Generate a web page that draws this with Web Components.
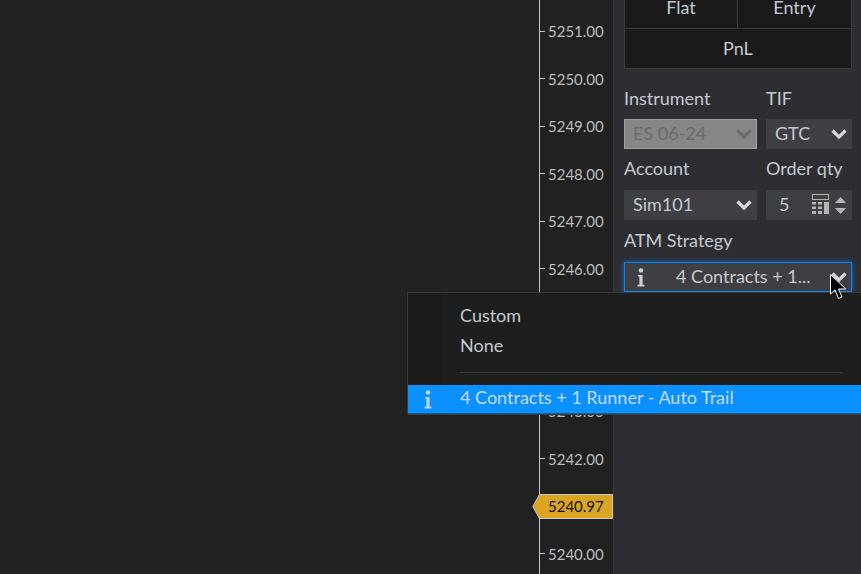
<!DOCTYPE html>
<html>
<head>
<meta charset="utf-8">
<title>Chart Trader</title>
<style>
html, body { margin: 0; height: 100%; overflow: hidden; background: #212121; }
body { font: 18px Lato, "Open Sans", sans-serif; color: #c4cad0; }
</style>
</head>
<body>
<trade-window>
	<price-axis slot="axis" from="5251" to="5240" marker="5240.97"></price-axis>
	<order-panel slot="panel"></order-panel>
	<atm-menu slot="menu"></atm-menu>
	<mouse-cursor slot="menu"></mouse-cursor>
</trade-window>

<script>
const FONT = `Lato, "Open Sans", sans-serif`

customElements.define("trade-window", class extends HTMLElement {
	connectedCallback() {
		if (this.shadowRoot) return
		this.attachShadow({mode: "open"}).innerHTML = `
			<style>
				:host {
					display: flex;
					position: relative;
					width: 861px;
					height: 574px;
					overflow: hidden;
					background: #212121;
				}
				.chart { width: 539px; flex: none; }
			</style>
			<div class="chart"></div>
			<slot name="axis"></slot>
			<slot name="panel"></slot>
			<slot name="menu"></slot>
		`
	}
})

customElements.define("price-axis", class extends HTMLElement {
	connectedCallback() {
		if (this.shadowRoot) return
		const from = +this.getAttribute("from")
		const to = +this.getAttribute("to")
		let ticks = ""
		for (let p = from; p >= to; p--) {
			ticks += `<div class="tick"><i></i><span>${p.toFixed(2)}</span></div>`
		}
		this.attachShadow({mode: "open"}).innerHTML = `
			<style>
				:host {
					display: block;
					position: relative;
					flex: none;
					width: 75px;
					height: 574px;
					box-sizing: border-box;
					border-left: 1px solid #c4c4c4;
					border-right: 1px solid #3a3a3d;
					padding-top: 7.5px;
					background: #212121;
				}
				.tick {
					display: flex;
					align-items: center;
					height: 47.5px;
					color: #bdbdbd;
					font: 15px ${FONT};
				}
				.tick i {
					display: block;
					width: 5px;
					height: 1px;
					margin-right: 3px;
					background: #c4c4c4;
				}
				.marker {
					position: absolute;
					left: -8px;
					top: 494px;
					width: 81px;
					height: 25px;
				}
				.marker svg { position: absolute; inset: 0; }
				.marker span {
					position: relative;
					display: block;
					padding-left: 16px;
					color: #111;
					font: 15px/25px ${FONT};
				}
			</style>
			${ticks}
			<div class="marker">
				<svg width="81" height="25"><path d="M.8 12.500 7.500.5H80.500V24.500H7.500Z" fill="#daa520" stroke="#c8c8c8"/></svg>
				<span>${this.getAttribute("marker")}</span>
			</div>
		`
	}
})

customElements.define("info-icon", class extends HTMLElement {
	connectedCallback() {
		if (this.shadowRoot) return
		this.attachShadow({mode: "open"}).innerHTML = `
			<style>
				:host { display: inline-flex; flex: none; width: 8px; height: 19px; color: #c3d3e2; }
			</style>
			<svg width="8" height="19" viewBox="0 0 8 19" fill="currentColor">
				<circle cx="4" cy="2.500" r="2.300"/>
				<path d="M1 7H5.600V16.800H7.400V18.500H.6V16.800H2.400V8.500H1Z"/>
			</svg>
		`
	}
})

customElements.define("field-select", class extends HTMLElement {
	connectedCallback() {
		if (this.shadowRoot) return
		this.attachShadow({mode: "open"}).innerHTML = `
			<style>
				:host {
					display: flex;
					align-items: center;
					box-sizing: border-box;
					height: 30px;
					padding: 0 5px 0 9px;
					background: #3e3e43;
					color: #c4cad0;
					font: 18px ${FONT};
				}
				:host([disabled]) {
					background: #868686;
					border: 1px solid #a0a0a0;
					padding-left: 8px;
					padding-right: 4px;
					color: #6b6b6b;
				}
				:host([focused]) {
					border: 1px solid #0c86ee;
					box-shadow: 0 0 5px #0a6fd0;
					padding: 0 4px 0 12px;
				}
				.text { flex: 1; padding-bottom: 3px; white-space: nowrap; overflow: hidden; }
				svg { flex: none; }
				:host([disabled]) path { stroke: #6b6b6b; }
			</style>
			<slot name="icon"></slot>
			<div class="text"><slot></slot></div>
			<slot name="extra">
				<svg width="16" height="12" viewBox="0 0 16 12"><path d="M1.500 2.500 8 9l6.500-6.500" fill="none" stroke="#d6d6d6" stroke-width="3.200"/></svg>
			</slot>
		`
	}
})

customElements.define("order-panel", class extends HTMLElement {
	connectedCallback() {
		if (this.shadowRoot) return
		this.attachShadow({mode: "open"}).innerHTML = `
			<style>
				:host {
					display: block;
					flex: 1;
					height: 574px;
					box-sizing: border-box;
					padding: 0 9px 0 10px;
					background: #2e2e32;
					color: #c4cad0;
					font: 18px ${FONT};
				}
				.pos {
					display: grid;
					grid-template-columns: 1fr 1fr;
					grid-template-rows: 39px 39px;
					margin-top: -11px;
					border: 1px solid #3c3c3f;
					background: #1a1a1a;
				}
				.pos div {
					display: flex;
					align-items: center;
					justify-content: center;
					padding-bottom: 2px;
				}
				.pos .flat { border-right: 1px solid #3c3c3f; border-bottom: 1px solid #3c3c3f; padding-bottom: 4px; }
				.pos .entry { border-bottom: 1px solid #3c3c3f; padding-bottom: 4px; }
				.pos .pnl { grid-column: 1 / 3; }
				.form {
					display: grid;
					grid-template-columns: 133px 86px;
					grid-template-rows: 50px 30px 41px 30px 42px 30px;
					column-gap: 9px;
				}
				.form label { align-self: end; padding-bottom: 11px; white-space: nowrap; }
				.form label.first { padding-bottom: 10px; }
				.wide { grid-column: 1 / 3; }
				.qty { display: flex; align-items: center; gap: 6px; margin-right: 1px; }
				.calc { margin: -2px 0 0 -1px; }
				.arrows { display: flex; flex-direction: column; gap: 5px; }
				.arrows svg { display: block; }
			</style>
			<div class="pos">
				<div class="flat">Flat</div>
				<div class="entry">Entry</div>
				<div class="pnl">PnL</div>
			</div>
			<div class="form">
				<label class="first">Instrument</label>
				<label class="first">TIF</label>
				<field-select disabled>ES 06-24</field-select>
				<field-select>GTC</field-select>
				<label>Account</label>
				<label>Order qty</label>
				<field-select>Sim101</field-select>
				<field-select>
					<span style="margin-left:4px">5</span>
					<span slot="extra" class="qty">
						<svg class="calc" width="17" height="20" viewBox="0 0 17 20" fill="#b4b4b4">
							<path fill-rule="evenodd" d="M0 0H17V6H0ZM1 1V5H16V1Z"/>
							<path d="M0 8h4v2.500H0zM6 8h4v2.500H6zM12 8h5v12h-5zM0 12.500h4V15H0zM6 12.500h4V15H6zM0 17h4v3H0zM6 17h4v3H6z"/>
						</svg>
						<span class="arrows">
							<svg width="11" height="7" viewBox="0 0 11 7"><path d="M.5 7 5.500 1.500l5 5.500Z" fill="#b4b4b4" stroke="#b4b4b4"/></svg>
							<svg width="11" height="7" viewBox="0 0 11 7"><path d="M.5 0 5.500 5.500l5-5.500Z" fill="#b4b4b4" stroke="#b4b4b4"/></svg>
						</span>
					</span>
				</field-select>
				<label class="wide">ATM Strategy</label>
				<field-select class="wide" focused>
					<info-icon slot="icon"></info-icon>
					<span style="margin-left:31px">4 Contracts + 1...</span>
				</field-select>
			</div>
		`
	}
})

customElements.define("atm-menu", class extends HTMLElement {
	connectedCallback() {
		if (this.shadowRoot) return
		this.attachShadow({mode: "open"}).innerHTML = `
			<style>
				:host {
					display: block;
					position: absolute;
					left: 407px;
					top: 292px;
					width: 454px;
					height: 123px;
					box-sizing: border-box;
					border: 1px solid #3a3a3a;
					border-right: 0;
					padding-top: 7px;
					background: linear-gradient(to right, #1c1c1c 35px, #1e1e1e 35px);
					color: #c4cad0;
					font: 18px ${FONT};
				}
				.row { height: 30px; padding-left: 52px; line-height: 30px; }
				.sep { height: 1px; margin: 12px 18px 12px 52px; background: #3c3c3c; }
				.sel {
					display: flex;
					align-items: center;
					box-sizing: border-box;
					height: 29px;
					padding-left: 16px;
					gap: 28px;
					background: #0a90ff;
					color: #c5dcf0;
					border-bottom: 1px solid #1c5a92;
				}
				.sel span { padding-bottom: 4px; }
			</style>
			<div class="row">Custom</div>
			<div class="row">None</div>
			<div class="sep"></div>
			<div class="sel"><info-icon></info-icon><span>4 Contracts + 1 Runner - Auto Trail</span></div>
		`
	}
})

customElements.define("mouse-cursor", class extends HTMLElement {
	connectedCallback() {
		if (this.shadowRoot) return
		this.attachShadow({mode: "open"}).innerHTML = `
			<style>
				:host { display: block; position: absolute; left: 830px; top: 274px; width: 18px; height: 26px; }
			</style>
			<svg width="18" height="26" viewBox="0 0 18 26">
				<path d="M.5.5V20L5 15.800 8.500 24.500 12 23 8.500 15H15.800Z" fill="#000" stroke="#fff"/>
			</svg>
		`
	}
})
</script>
</body>
</html>
